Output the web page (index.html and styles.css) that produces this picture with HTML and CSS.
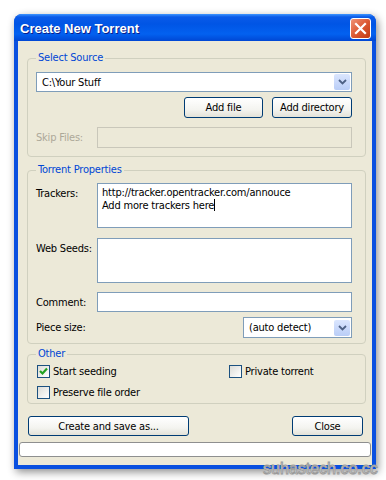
FILE: index.html
```html
<!DOCTYPE html>
<html lang="en">
<head>
<meta charset="UTF-8">
<meta name="viewport" content="width=device-width, initial-scale=1.0">
<title>Create New Torrent</title>
<link rel="stylesheet" href="styles.css">
</head>
<body>
    <div class="window">
        <div class="titlebar">
            <span class="title">Create New Torrent</span>
            <span class="close">
                <svg width="13" height="13" viewBox="0 0 13 13"><path d="M2 2 L11 11 M11 2 L2 11" stroke="#fff" stroke-width="2.2" stroke-linecap="square"/></svg>
            </span>
        </div>

        <div class="content">
            <fieldset class="group source">
                <legend>Select Source</legend>
                <div class="combo full">
                    <span class="value">C:\Your Stuff</span>
                    <span class="arrow"><svg width="9" height="6" viewBox="0 0 9 6"><path d="M1 1 L4.5 4.5 L8 1" fill="none" stroke="#4d6185" stroke-width="1.8"/></svg></span>
                </div>
                <div class="btn-row">
                    <span class="btn add-file">Add file</span>
                    <span class="btn add-dir">Add directory</span>
                </div>
                <div class="field-row off">
                    <span class="label">Skip Files:</span>
                    <span class="input disabled"></span>
                </div>
            </fieldset>

            <fieldset class="group props">
                <legend>Torrent Properties</legend>
                <div class="field-row top">
                    <span class="label">Trackers:</span>
                    <span class="input area">http://tracker.opentracker.com/annouce<br>Add more trackers here<i class="caret"></i></span>
                </div>
                <div class="field-row top seeds">
                    <span class="label">Web Seeds:</span>
                    <span class="input area"></span>
                </div>
                <div class="field-row comment">
                    <span class="label">Comment:</span>
                    <span class="input"></span>
                </div>
                <div class="field-row piece">
                    <span class="label">Piece size:</span>
                    <div class="combo small">
                        <span class="value">(auto detect)</span>
                        <span class="arrow"><svg width="9" height="6" viewBox="0 0 9 6"><path d="M1 1 L4.5 4.5 L8 1" fill="none" stroke="#4d6185" stroke-width="1.8"/></svg></span>
                    </div>
                </div>
            </fieldset>

            <fieldset class="group other">
                <legend>Other</legend>
                <div class="check-grid">
                    <span class="check"><span class="box on"><svg width="9" height="9" viewBox="0 0 9 9"><path d="M1 4 L3.5 6.5 L8 1.5" fill="none" stroke="#21a121" stroke-width="2.2"/></svg></span>Start seeding</span>
                    <span class="check"><span class="box"></span>Private torrent</span>
                    <span class="check"><span class="box"></span>Preserve file order</span>
                </div>
            </fieldset>

            <div class="actions">
                <span class="btn create">Create and save as...</span>
                <span class="btn close-btn">Close</span>
            </div>
            <div class="progress"></div>
        </div>
    </div>

    <span class="watermark">suhastech.co.cc</span>
</body>
</html>
```

FILE: styles.css
```css
body {
    margin: 0;
    padding: 0;
    background: #fff;
    font-family: "DejaVu Sans Condensed", "DejaVu Sans", sans-serif;
    font-size: 11px;
    letter-spacing: -0.2px;
    color: #000;
    width: 386px;
    height: 480px;
    overflow: hidden;
}
.window {
    margin: 14px 0 0 14px;
    width: 362px;
    border-radius: 8px 8px 0 0;
    background: #0a50e0;
    box-shadow: 2px 3px 9px rgba(0, 0, 0, 0.45);
    padding: 0 4px 4px 4px;
    box-sizing: border-box;
}
.titlebar {
    height: 27px;
    margin: 0 -4px;
    padding: 0 5px 0 6px;
    border-radius: 8px 8px 0 0;
    background: linear-gradient(#3d95ff 0, #0a5ae8 3px, #0055e5 10px, #0361f0 20px, #0047d4 27px);
    display: flex;
    align-items: center;
    justify-content: space-between;
}
.title {
    color: #fff;
    font-family: "Liberation Sans", sans-serif;
    font-weight: bold;
    font-size: 13px;
    letter-spacing: 0;
    text-shadow: 1px 1px 0 #0a1e8c;
    padding-top: 1px;
}
.close {
    width: 19px;
    height: 19px;
    border: 1px solid #fff;
    border-radius: 3px;
    background: linear-gradient(135deg, #f09477, #dc5a34 50%, #c13a12);
    display: flex;
    align-items: center;
    justify-content: center;
    margin-top: 1px;
}
.content {
    background: #ece9d8;
    padding: 10px 0 8px 0;
    display: flex;
    flex-direction: column;
}
.group {
    margin: 0 0 0 9px;
    width: 339px;
    box-sizing: border-box;
    border: 1px solid #d0d0bf;
    border-radius: 4px;
    padding: 0 13px 8px 8px;
    display: flex;
    flex-direction: column;
}
.group legend {
    color: #0046d5;
    padding: 0 2px;
    line-height: 14px;
    height: 14px;
}
.source {
    padding-top: 7px;
}
.props {
    margin-top: 6px;
    padding-top: 6px;
    padding-bottom: 5px;
}
.other {
    margin-top: 3px;
    padding-top: 4px;
    padding-bottom: 4px;
}
.combo {
    height: 20px;
    box-sizing: border-box;
    border: 1px solid #7f9db9;
    background: #fff;
    display: flex;
    align-items: center;
    justify-content: space-between;
    padding: 0 1px 0 5px;
}
.combo.small {
    width: 109px;
    height: 21px;
}
.arrow {
    width: 16px;
    height: 16px;
    border-radius: 2px;
    background: linear-gradient(#dbe6fe, #b9cdf7);
    display: flex;
    align-items: center;
    justify-content: center;
}
.btn-row {
    display: flex;
    justify-content: flex-end;
    gap: 9px;
    margin-top: 5px;
}
.btn {
    height: 21px;
    box-sizing: border-box;
    border: 1px solid #003c74;
    border-radius: 3px;
    background: linear-gradient(#ffffff, #f4f4f0 60%, #e3e2d8);
    display: flex;
    align-items: center;
    justify-content: center;
}
.add-file {
    width: 79px;
}
.add-dir {
    width: 80px;
}
.field-row {
    display: flex;
    align-items: center;
}
.source .field-row {
    margin-top: 9px;
}
.field-row.top {
    align-items: flex-start;
}
.field-row.seeds {
    margin-top: 10px;
}
.field-row.comment {
    margin-top: 9px;
}
.field-row.piece {
    justify-content: space-between;
    margin-top: 5px;
}
.field-row .label {
    width: 61px;
    flex: none;
}
.field-row.top .label {
    padding-top: 4px;
}
.field-row.off .label {
    color: #aca899;
}
.input {
    flex: 1;
    height: 20px;
    box-sizing: border-box;
    border: 1px solid #7f9db9;
    background: #fff;
}
.input.disabled {
    height: 21px;
    border-color: #c9c7ba;
    background: #ece9d8;
}
.input.area {
    height: 45px;
    padding: 3px 4px;
    line-height: 12px;
}
.caret {
    display: inline-block;
    width: 1px;
    height: 12px;
    background: #000;
    vertical-align: -2px;
}
.check-grid {
    display: grid;
    grid-template-columns: 192px 1fr;
    row-gap: 8px;
    padding-left: 1px;
}
.check {
    display: flex;
    align-items: center;
    gap: 3px;
    height: 13px;
}
.box {
    width: 13px;
    height: 13px;
    box-sizing: border-box;
    border: 1px solid #1c5180;
    background: linear-gradient(135deg, #dcdcd7, #fff);
    display: flex;
    align-items: center;
    justify-content: center;
}
.actions {
    display: flex;
    justify-content: space-between;
    padding: 0 9px 0 10px;
    margin-top: 12px;
}
.actions .btn {
    height: 20px;
}
.create {
    width: 161px;
}
.close-btn {
    width: 71px;
}
.progress {
    margin: 6px 1px 0 1px;
    height: 15px;
    box-sizing: border-box;
    border: 1px solid #8e8f8f;
    border-radius: 3px;
    background: #fff;
}
.watermark {
    position: absolute;
    left: 263px;
    top: 460px;
    font-family: "Liberation Sans", sans-serif;
    font-size: 16px;
    line-height: 18px;
    letter-spacing: 0;
    color: #fff;
    -webkit-text-stroke: 1px #9a9a9a;
}
```
